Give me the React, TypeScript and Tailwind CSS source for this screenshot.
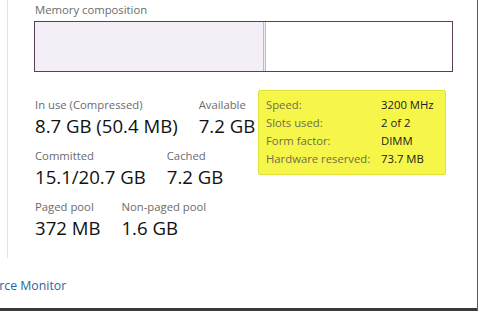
import React from 'react';

const font = { fontFamily: '"Open Sans", "Noto Sans", Arial, sans-serif' };

export default function App() {
  const stats = [
    [
      { label: 'In use (Compressed)', value: '8.7 GB (50.4 MB)' },
      { label: 'Available', value: '7.2 GB' },
    ],
    [
      { label: 'Committed', value: '15.1/20.7 GB' },
      { label: 'Cached', value: '7.2 GB' },
    ],
    [
      { label: 'Paged pool', value: '372 MB' },
      { label: 'Non-paged pool', value: '1.6 GB' },
    ],
  ];

  const specs = [
    ['Speed:', '3200 MHz'],
    ['Slots used:', '2 of 2'],
    ['Form factor:', 'DIMM'],
    ['Hardware reserved:', '73.7 MB'],
  ];

  return (
    <div
      className="relative w-[478px] h-[311px] overflow-hidden bg-white border-r border-[#5a5a5a] flex flex-col"
      style={font}
    >
      {/* Main panel with left rule */}
      <div className="ml-[7px] h-[258px] border-l border-[#e3e3e3] pl-[26px] pt-[2px]">
        <div className="text-[11.3px] leading-[16px] text-[#6b6b6b] pl-[1px]">Memory composition</div>

        {/* Composition bar */}
        <div className="mt-[3px] w-[419px] h-[51px] border border-[#5a3d5c] flex">
          <div className="w-[228px] h-full bg-[#f4eff6]" />
          <div className="w-[1px] h-full bg-[#c9b3cf]" />
          <div className="w-[1px] h-full bg-[#f4eff6]" />
          <div className="w-[1px] h-full bg-[#c9b3cf]" />
          <div className="flex-1 h-full bg-white" />
        </div>

        {/* Stats */}
        <div className="mt-[25px] flex flex-col gap-[9px] pl-[1px]">
          {stats.map((row, i) => (
            <div key={i} className="flex gap-[21px]">
              {row.map((s) => (
                <div key={s.label} className="flex flex-col">
                  <div className="text-[11.3px] leading-[16px] text-[#6b6b6b]">{s.label}</div>
                  <div className="text-[18.6px] leading-[26px] text-[#111]">{s.value}</div>
                </div>
              ))}
            </div>
          ))}
        </div>
      </div>

      {/* Link, cut by the window edge */}
      <div className="mt-[20px] -ml-[36px] text-[12.3px] leading-[16px] text-[#2a64a0] whitespace-nowrap">
        Resource Monitor
      </div>

      <div className="flex-1" />
      <div className="h-[3px] bg-[#3a3a3a]" />

      {/* Highlighted hardware info */}
      <div className="absolute left-[258px] top-[90px] w-[188px] h-[85px] rounded-[2px] bg-[#f6f64a] border border-[#e2e236] pt-[5px] pl-[7px]">
        {specs.map(([k, v]) => (
          <div key={k} className="flex text-[11.3px] leading-[18px]">
            <div className="w-[115px] text-[#6e6e48]">{k}</div>
            <div className="text-[#1a1a1a]">{v}</div>
          </div>
        ))}
      </div>
    </div>
  );
}
